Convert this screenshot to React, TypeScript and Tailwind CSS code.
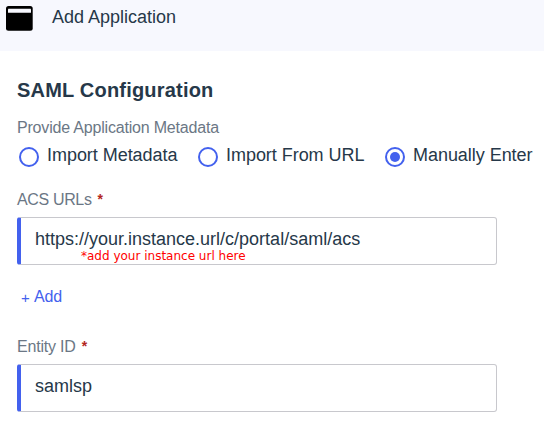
import type { ReactNode } from "react";

function Radio({ label, checked = false, className = "" }: { label: string; checked?: boolean; className?: string }) {
  return (
    <div role="radio" aria-checked={checked} className={`flex items-start ${className}`}>
      <span className="mt-[2px] flex size-5 shrink-0 items-center justify-center rounded-full border-2 border-[#4361ee]">
        {checked && <span className="size-[10px] rounded-full bg-[#4361ee]" />}
      </span>
      <span className="ml-[8px] text-[18px] leading-5 tracking-[-0.04px] whitespace-nowrap">{label}</span>
    </div>
  );
}

function Label({ children }: { children: ReactNode }) {
  return (
    <div className="flex h-5 text-[16px] leading-5 text-[#6b7785]">
      {children}
      <span className="ml-[6px] text-[14px] leading-[18px] font-bold text-[#b3261e]">*</span>
    </div>
  );
}

function Field({ value, note }: { value: string; note?: string }) {
  return (
    <div className="flex h-12 w-[480px] flex-col rounded-[3px] border border-l-4 border-[#c8c8cd] border-l-[#4361ee] pt-[11px] pl-[14px]">
      <span className="text-[18px] leading-5">{value}</span>
      {note && (
        <span className="-mt-px ml-[46px] font-['DejaVu_Sans',sans-serif] text-[12px] leading-4 text-[#ff0000]">{note}</span>
      )}
    </div>
  );
}

export default function App() {
  return (
    <div className="h-[423px] w-[544px] overflow-hidden bg-white font-['Liberation_Sans',Arial,sans-serif] text-[#263849]">
      <header className="flex h-[51px] items-start bg-[#f7f8fe] pt-[6px] pl-[6px]">
        <svg width="27" height="25" viewBox="0 0 27 25" aria-hidden="true">
          <rect width="26.7" height="24.7" rx="2.5" fill="#000" />
          <rect x="2" y="2.8" width="23" height="4" rx="0.4" fill="#f7f8fe" />
        </svg>
        <span className="mt-px ml-[19px] text-[18px] leading-5">Add Application</span>
      </header>
      <main className="pl-[17px]">
        <h1 className="pt-[27px] text-[20px] leading-6 font-bold tracking-[0.2px]">SAML Configuration</h1>
        <p className="mt-[16px] text-[16px] leading-5 tracking-[-0.19px] text-[#6b7785]">Provide Application Metadata</p>
        <div className="mt-[7px] flex h-6 items-start pl-[2px]" role="radiogroup">
          <Radio label="Import Metadata" className="w-[179px]" />
          <Radio label="Import From URL" className="w-[187px]" />
          <Radio label="Manually Enter" checked />
        </div>
        <div className="mt-[21px]">
          <Label><span className="tracking-[-0.35px]">ACS URLs</span></Label>
          <div className="mt-[7px]">
            <Field value="https://your.instance.url/c/portal/saml/acs" note="*add your instance url here" />
          </div>
        </div>
        <button className="mt-[22px] ml-[4px] flex text-[16px] leading-5 tracking-[-0.15px] text-[#4361ee]">
          <span className="w-[13px] pt-px text-left text-[15px]">+</span>
          <span>Add</span>
        </button>
        <div className="mt-[29px]">
          <Label><span className="tracking-[-0.2px]">Entity ID</span></Label>
          <div className="mt-[7px]">
            <Field value="samlsp" />
          </div>
        </div>
      </main>
    </div>
  );
}
